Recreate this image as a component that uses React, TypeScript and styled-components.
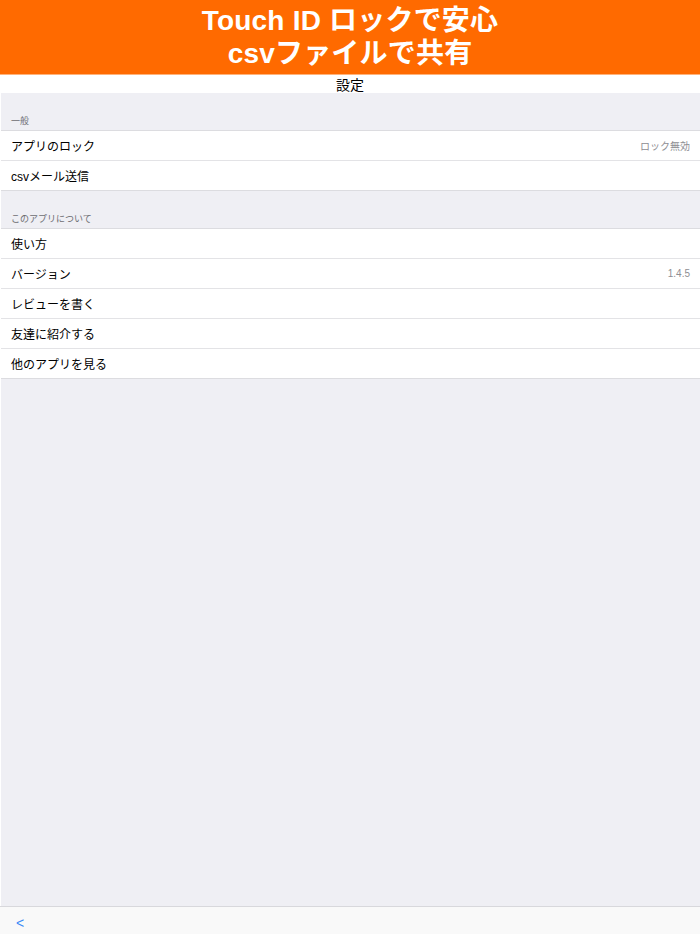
import styled, { createGlobalStyle } from "styled-components";

const Global = createGlobalStyle`
html, body {
  margin: 0;
  padding: 0;
  height: 100%;
}
body {
  font-family: "Liberation Sans", "Noto Sans CJK JP", sans-serif;
  background: #efeff4;
}
#root {
  height: 100%;
}
`;

const Page = styled.div`
display: flex;
flex-direction: column;
width: 700px;
height: 934px;
overflow: hidden;
`;

const Banner = styled.header`
display: flex;
flex-direction: column;
align-items: center;
justify-content: center;
height: 74px;
background-color: #ff6a00;
border-bottom: 1px solid #ffb27a;
color: #ffffff;
font-family: "Liberation Sans", "Noto Sans CJK JP", sans-serif;
font-weight: 700;
font-size: 28px;
line-height: 33px;
letter-spacing: 0.2px;
`;

const NavBar = styled.div`
display: flex;
justify-content: center;
align-items: center;
height: 18px;
background-color: #ffffff;
font-size: 14px;
color: #000000;
`;

const Content = styled.main`
flex: 1;
display: flex;
flex-direction: column;
border-left: 1px solid #ffffff;
background-color: #efeff4;
`;

const SectionHeader = styled.div<{ h: number }>`
display: flex;
align-items: flex-end;
height: ${(p) => p.h}px;
padding: 0 0 3px 10px;
box-sizing: border-box;
font-size: 9px;
color: #6d6d72;
border-bottom: 1px solid #dcdce0;
`;

const Group = styled.div`
display: flex;
flex-direction: column;
background-color: #ffffff;
border-bottom: 1px solid #dcdce0;
`;

const Row = styled.div`
display: flex;
align-items: center;
justify-content: space-between;
height: 29px;
padding: 0 10px;
font-size: 12px;
color: #000000;
& + & {
  border-top: 1px solid #e3e3e6;
}
`;

const Value = styled.span`
font-size: 10px;
color: #8e8e93;
`;

const Toolbar = styled.footer`
display: flex;
align-items: center;
height: 28px;
padding: 4px 0 0 16px;
box-sizing: border-box;
background-color: #f9f9f9;
border-top: 1px solid #d8d8dc;
color: #3b8cf7;
font-size: 14px;
`;

type Item = { label: string; value?: string };

const general: Item[] = [
  { label: "アプリのロック", value: "ロック無効" },
  { label: "csvメール送信" },
];

const about: Item[] = [
  { label: "使い方" },
  { label: "バージョン", value: "1.4.5" },
  { label: "レビューを書く" },
  { label: "友達に紹介する" },
  { label: "他のアプリを見る" },
];

function Section({ title, items, h }: { title: string; items: Item[]; h: number }) {
  return (
    <>
      <SectionHeader h={h}>{title}</SectionHeader>
      <Group>
        {items.map((it) => (
          <Row key={it.label}>
            <span>{it.label}</span>
            {it.value && <Value>{it.value}</Value>}
          </Row>
        ))}
      </Group>
    </>
  );
}

function App() {
  return (
    <Page>
      <Global />
      <Banner>
        <div>Touch ID ロックで安心</div>
        <div>csvファイルで共有</div>
      </Banner>
      <NavBar>設定</NavBar>
      <Content>
        <Section title="一般" items={general} h={38} />
        <Section title="このアプリについて" items={about} h={38} />
      </Content>
      <Toolbar>&lt;</Toolbar>
    </Page>
  );
}

export default App;
